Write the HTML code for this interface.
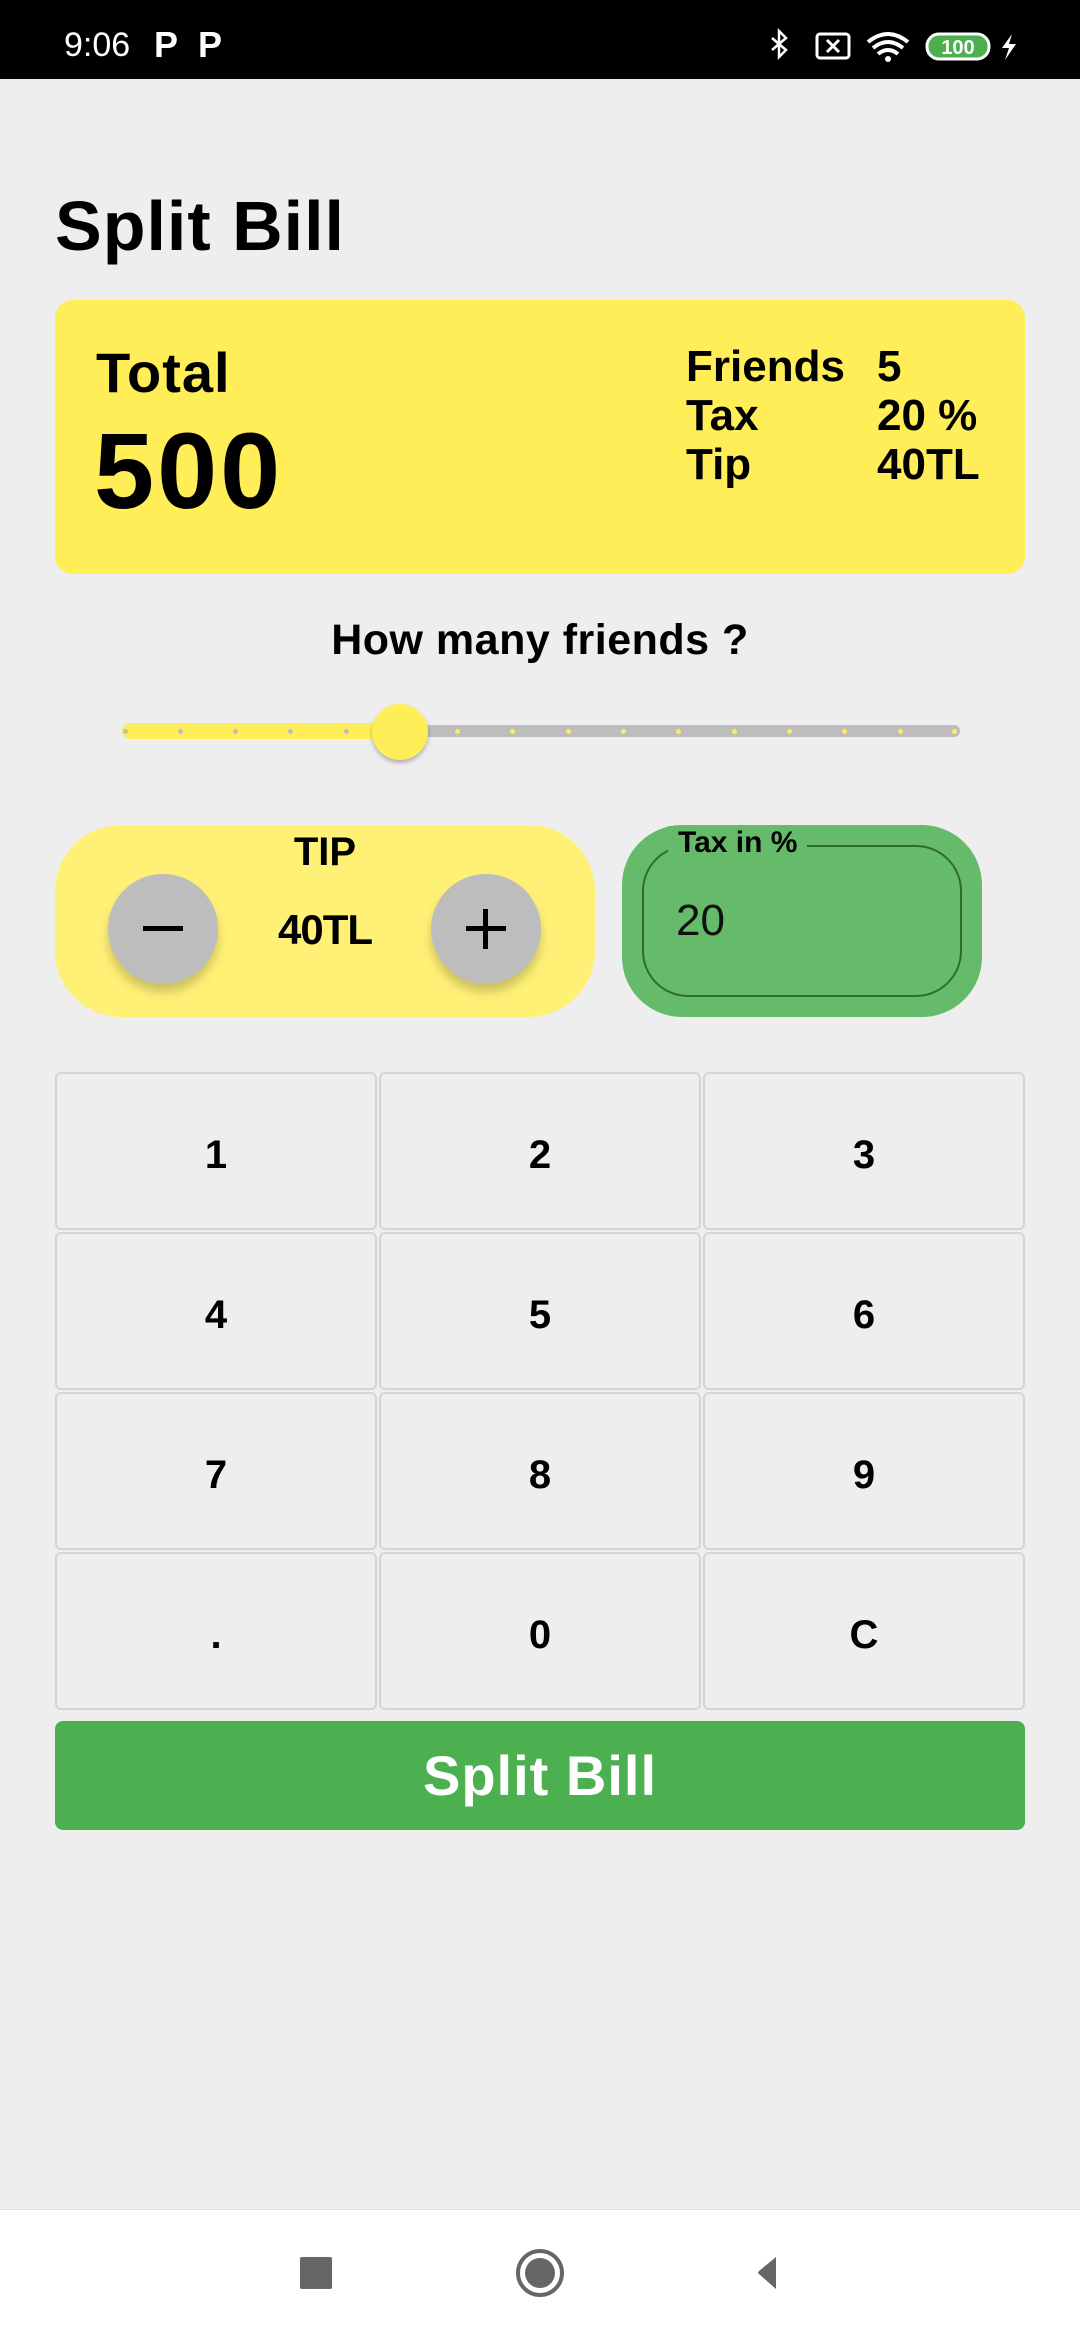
<!DOCTYPE html>
<html><head><meta charset="utf-8"><style>
*{margin:0;padding:0;box-sizing:border-box}
body{width:1080px;height:2340px;background:#eeeeee;position:relative;overflow:hidden;font-family:"Liberation Sans",sans-serif;font-weight:bold;color:#000}
.a{position:absolute}
.key{position:absolute;width:322px;height:158px;border:2px solid #d4d4d4;border-radius:6px;background:#eeeeee;display:flex;align-items:center;justify-content:center;font-size:40px;padding-top:8px}
.tick{position:absolute;width:5px;height:5px;border-radius:50%;top:729px}
</style></head><body>
<div class="a" style="left:0;top:0;width:1080px;height:79px;background:#000"></div>
<div class="a" style="left:64px;top:26px;color:#fff;font-size:34px;font-weight:normal">9:06</div>
<div class="a" style="left:154px;top:24px;color:#fff;font-size:36px">P&nbsp;&nbsp;P</div>
<svg class="a" style="left:760px;top:28px" width="260" height="36" viewBox="0 0 260 36">
<path d="M12 10 L26 22 L19 29 V3 L26 10 L12 22" fill="none" stroke="#fff" stroke-width="2.5"/>
<rect x="57" y="6" width="32" height="24" rx="3" fill="none" stroke="#fff" stroke-width="3"/>
<path d="M67 12 L79 24 M79 12 L67 24" stroke="#fff" stroke-width="3"/>
<path d="M108 14 Q128 -2 148 14 M113 20 Q128 8 143 20 M118 26 Q128 18 138 26" fill="none" stroke="#fff" stroke-width="4"/>
<circle cx="128" cy="31" r="3" fill="#fff"/>
<rect x="167" y="6" width="62" height="25" rx="12" fill="#4caf50" stroke="#fff" stroke-width="3"/>
<text x="198" y="26" text-anchor="middle" fill="#fff" font-size="20" font-family="Liberation Sans">100</text>
<path d="M252 6 L242 20 H249 L245 32 L256 16 H249 Z" fill="#fff"/>
</svg>

<div class="a" style="left:55px;top:186px;font-size:70px;letter-spacing:1px">Split Bill</div>

<div class="a" style="left:55px;top:300px;width:970px;height:274px;background:#ffee58;border-radius:18px"></div>
<div class="a" style="left:96px;top:340px;font-size:56px;letter-spacing:1px">Total</div>
<div class="a" style="left:94px;top:408px;font-size:108px;letter-spacing:3px">500</div>
<div class="a" style="left:686px;top:342px;font-size:44px;line-height:49px">Friends<br>Tax<br>Tip</div>
<div class="a" style="left:877px;top:342px;font-size:44px;line-height:49px">5<br>20 %<br>40TL</div>

<div class="a" style="left:0;top:616px;width:1080px;text-align:center;font-size:43px;letter-spacing:0.5px">How many friends ?</div>
<div class="a" style="left:122px;top:725px;width:838px;height:12px;background:#bdbdbd;border-radius:6px"></div>
<div class="a" style="left:122px;top:723px;width:280px;height:16px;background:#ffee58;border-radius:8px"></div>
<div class="tick" style="left:123px;background:#bdbdbd"></div>
<div class="tick" style="left:178px;background:#bdbdbd"></div>
<div class="tick" style="left:233px;background:#bdbdbd"></div>
<div class="tick" style="left:288px;background:#bdbdbd"></div>
<div class="tick" style="left:344px;background:#bdbdbd"></div>
<div class="tick" style="left:455px;background:#ffee58"></div>
<div class="tick" style="left:510px;background:#ffee58"></div>
<div class="tick" style="left:566px;background:#ffee58"></div>
<div class="tick" style="left:621px;background:#ffee58"></div>
<div class="tick" style="left:676px;background:#ffee58"></div>
<div class="tick" style="left:732px;background:#ffee58"></div>
<div class="tick" style="left:787px;background:#ffee58"></div>
<div class="tick" style="left:842px;background:#ffee58"></div>
<div class="tick" style="left:898px;background:#ffee58"></div>
<div class="tick" style="left:952px;background:#ffee58"></div>
<div class="a" style="left:372px;top:704px;width:56px;height:56px;border-radius:50%;background:#ffee58;box-shadow:0 3px 4px rgba(0,0,0,.25)"></div>

<div class="a" style="left:55px;top:825px;width:540px;height:192px;background:#fff176;border-radius:66px"></div>
<div class="a" style="left:55px;top:830px;width:540px;text-align:center;font-size:40px">TIP</div>
<div class="a" style="left:108px;top:874px;width:110px;height:110px;border-radius:50%;background:#bdbdbd;box-shadow:0 8px 10px rgba(0,0,0,.2)"></div>
<div class="a" style="left:431px;top:874px;width:110px;height:110px;border-radius:50%;background:#bdbdbd;box-shadow:0 8px 10px rgba(0,0,0,.2)"></div>
<div class="a" style="left:143px;top:926px;width:40px;height:5px;background:#000"></div>
<div class="a" style="left:466px;top:926px;width:40px;height:5px;background:#000"></div>
<div class="a" style="left:483px;top:909px;width:5px;height:40px;background:#000"></div>
<div class="a" style="left:55px;top:906px;width:540px;text-align:center;font-size:42px;letter-spacing:-1px">40TL</div>

<div class="a" style="left:622px;top:825px;width:360px;height:192px;background:#66bb6a;border-radius:60px"></div>
<div class="a" style="left:642px;top:845px;width:320px;height:152px;border:2.5px solid #2e6b31;border-radius:46px"></div>
<div class="a" style="left:668px;top:826px;padding:0 10px;background:#66bb6a;font-size:30px">Tax in %</div>
<div class="a" style="left:676px;top:896px;font-size:44px;font-weight:normal;color:#111">20</div>

<div class="key" style="left:55px;top:1072px">1</div>
<div class="key" style="left:379px;top:1072px">2</div>
<div class="key" style="left:703px;top:1072px">3</div>
<div class="key" style="left:55px;top:1232px">4</div>
<div class="key" style="left:379px;top:1232px">5</div>
<div class="key" style="left:703px;top:1232px">6</div>
<div class="key" style="left:55px;top:1392px">7</div>
<div class="key" style="left:379px;top:1392px">8</div>
<div class="key" style="left:703px;top:1392px">9</div>
<div class="key" style="left:55px;top:1552px">.</div>
<div class="key" style="left:379px;top:1552px">0</div>
<div class="key" style="left:703px;top:1552px">C</div>

<div class="a" style="left:55px;top:1721px;width:970px;height:109px;background:#4caf50;border-radius:8px;color:#fff;font-size:56px;letter-spacing:1px;display:flex;align-items:center;justify-content:center">Split Bill</div>

<div class="a" style="left:0;top:2209px;width:1080px;height:131px;background:#fff;border-top:1px solid #e0e0e0"></div>
<div class="a" style="left:300px;top:2257px;width:32px;height:32px;background:#666;border-radius:2px"></div>
<div class="a" style="left:516px;top:2249px;width:48px;height:48px;border-radius:50%;border:4px solid #666"></div>
<div class="a" style="left:525px;top:2258px;width:30px;height:30px;border-radius:50%;background:#666"></div>
<svg class="a" style="left:742px;top:2255px" width="36" height="36"><path d="M34 2 V34 L17 19 Q15 18 17 16 Z" fill="#666"/></svg>
</body></html>
